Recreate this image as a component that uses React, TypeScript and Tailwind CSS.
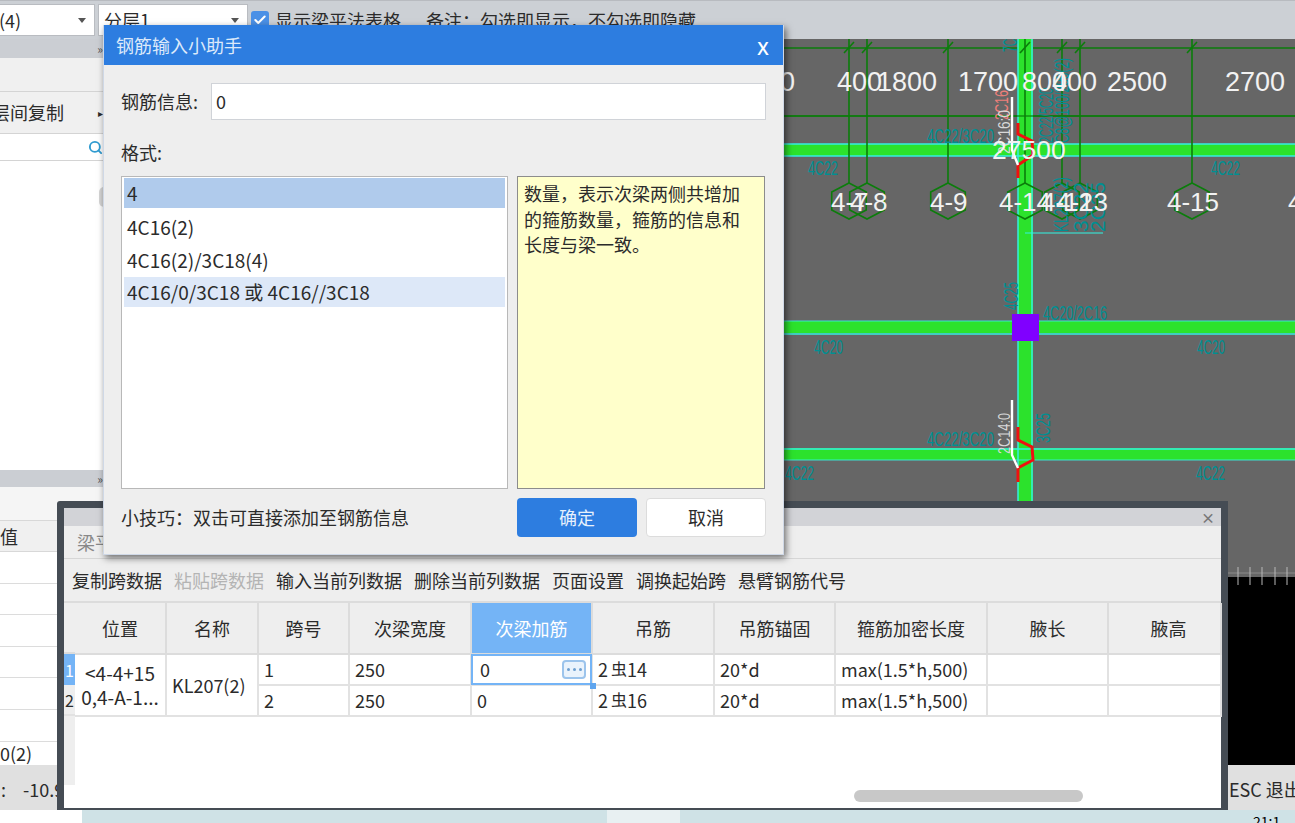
import React from 'react';
import { Check, Search } from 'lucide-react';

const uiFont = { fontFamily: '"Noto Sans CJK SC", "Noto Sans", sans-serif' };

// full-width punctuation, as the app prints it
const COMMA = '\uFF0C';
const COLON = '\uFF1A';
const NOTE_TEXT = `备注${COLON}勾选即显示${COMMA}不勾选即隐藏`;
const TIP_TEXT = `小技巧${COLON}双击可直接添加至钢筋信息`;
const HELP_TEXT = `数量${COMMA}表示次梁两侧共增加的箍筋数量${COMMA}箍筋的信息和长度与梁一致。`;

const GRID_X = [849, 867, 948, 1025, 1062, 1080, 1192];
const OX = 784;

const hexPoints = (cx: number, cy: number, r: number) => {
  const h = r * 0.96;
  return [
    [cx, cy - r],
    [cx + h, cy - r / 2],
    [cx + h, cy + r / 2],
    [cx, cy + r],
    [cx - h, cy + r / 2],
    [cx - h, cy - r / 2],
  ]
    .map((p) => `${p[0] - OX},${p[1] - 39}`)
    .join(' ');
};

const tx = (x: number) => x - OX;
const ty = (y: number) => y - 39;

const DIM_LABELS: [string, number][] = [
  ['0', 780],
  ['400', 837],
  ['1800', 877],
  ['1700', 958],
  ['800', 1022],
  ['400', 1052],
  ['2500', 1107],
  ['2700', 1225],
];

const AXIS_LABELS: [string, number][] = [
  ['4-7', 831],
  ['4-8', 850],
  ['4-9', 930],
  ['4-14', 999],
  ['4-12', 1041],
  ['4-13', 1056],
  ['4-15', 1167],
  ['4', 1288],
];

// text, x, baseline, drawn width
const TEAL_LABELS: [string, number, number, number][] = [
  ['4C22/3C20', 927, 143, 67],
  ['4C22', 808, 175, 30],
  ['4C22', 1211, 175, 29],
  ['4C20/2C16', 1043, 320, 64],
  ['4C20', 814, 354, 29],
  ['4C20', 1197, 354, 28],
  ['4C22/3C20', 927, 446, 67],
  ['4C22', 785, 480, 29],
  ['4C22', 1196, 480, 29],
];

const TEAL_ROTATED: [string, number, number, number][] = [
  ['7C', 1017, 52, 13],
  ['2C22/5C20', 1053, 143, 55],
  ['C8@100/200(2)', 1069, 143, 85],
  ['KL207(2)', 1068, 232, 55],
  ['3C22', 1088, 232, 50],
  ['2C25', 1105, 232, 50],
  ['4C25', 1018, 310, 28],
  ['3C25', 1050, 443, 30],
];

function Drawing() {
  return (
    <svg className="block h-[726px] w-[511px]" viewBox="0 0 511 726" style={{ fontFamily: '"Liberation Sans", sans-serif' }}>
      <rect width="511" height="538" fill="#666666" />
      {/* axis lines */}
      <g stroke="#0b7d0b" strokeWidth="1.6" fill="none">
        <line x1="0" x2="511" y1={ty(48)} y2={ty(48)} />
        <line x1="0" x2="511" y1={ty(116)} y2={ty(116)} />
      </g>
      {/* beams */}
      <rect x="0" y={ty(144)} width="511" height="12" fill="#2ce22c" />
      <rect x="0" y={ty(321)} width="511" height="12" fill="#2ce22c" />
      <rect x="0" y={ty(448)} width="511" height="12" fill="#2ce22c" />
      <rect x={tx(1018)} y="0" width="15" height="462" fill="#2ce22c" />
      <g stroke="#35efe0" strokeWidth="1.5">
        <line x1="0" x2="511" y1={ty(144)} y2={ty(144)} />
        <line x1="0" x2="511" y1={ty(156)} y2={ty(156)} />
        <line x1="0" x2="511" y1={ty(321)} y2={ty(321)} strokeOpacity="0.6" />
        <line x1="0" x2="511" y1={ty(334)} y2={ty(334)} />
        <line x1="0" x2="511" y1={ty(449)} y2={ty(449)} />
        <line x1="0" x2="511" y1={ty(460)} y2={ty(460)} strokeOpacity="0.6" />
        <line x1={tx(1018)} x2={tx(1018)} y1="0" y2="462" />
        <line x1={tx(1032)} x2={tx(1032)} y1="0" y2="462" />
        <line x1={tx(1025)} x2={tx(1103)} y1={ty(233)} y2={ty(233)} strokeOpacity="0.7" />
      </g>
      <g stroke="#0b7d0b" strokeWidth="1.6" fill="none">
        <line x1="0" x2="511" y1={ty(116)} y2={ty(116)} strokeOpacity="0.8" />
        {GRID_X.map((x) => (
          <g key={x}>
            <line x1={tx(x)} x2={tx(x)} y1={0} y2={ty(183)} />
            <line x1={tx(x) - 5} x2={tx(x) + 5} y1={ty(53)} y2={ty(42)} />
            <polygon points={hexPoints(x, 201, 18)} />
          </g>
        ))}
      </g>
      <rect x={tx(1012)} y={ty(314)} width="27" height="27" fill="#8000ff" />
      {/* teal rebar notes */}
      <g fill="#008f92" fontSize="20">
        {TEAL_LABELS.map(([t, x, y, w]) => (
          <text key={`${t}-${x}-${y}`} x={tx(x)} y={ty(y)} textLength={w} lengthAdjust="spacingAndGlyphs">
            {t}
          </text>
        ))}
        {TEAL_ROTATED.map(([t, x, y, w]) => (
          <text key={`${t}-${x}`} transform={`translate(${tx(x)} ${ty(y)}) rotate(-90)`} textLength={w} lengthAdjust="spacingAndGlyphs">
            {t}
          </text>
        ))}
      </g>
      {/* hanger bars */}
      <g fill="none" strokeWidth="3">
        <polyline stroke="#f01010" points={`${tx(1018)},${ty(123)} ${tx(1018)},${ty(134)} ${tx(1032)},${ty(141)} ${tx(1033)},${ty(155)} ${tx(1018)},${ty(165)} ${tx(1018)},${ty(178)}`} />
        <polyline stroke="#ffffff" strokeWidth="2.4" points={`${tx(1012)},${ty(97)} ${tx(1012)},${ty(150)} ${tx(1018)},${ty(165)}`} />
        <polyline stroke="#f01010" points={`${tx(1018)},${ty(427)} ${tx(1018)},${ty(440)} ${tx(1032)},${ty(447)} ${tx(1033)},${ty(460)} ${tx(1018)},${ty(468)} ${tx(1018)},${ty(482)}`} />
        <polyline stroke="#ffffff" strokeWidth="2.4" points={`${tx(1012)},${ty(400)} ${tx(1012)},${ty(455)} ${tx(1018)},${ty(468)}`} />
      </g>
      <text transform={`translate(${tx(1008)} ${ty(120)}) rotate(-90)`} fill="#ee7f7a" fontSize="18" textLength="30" lengthAdjust="spacingAndGlyphs">2C16</text>
      <text transform={`translate(${tx(1010)} ${ty(154)}) rotate(-90)`} fill="#d8d8d8" fontSize="17" textLength="44" lengthAdjust="spacingAndGlyphs">2C16:0</text>
      <text transform={`translate(${tx(1010)} ${ty(454)}) rotate(-90)`} fill="#d8d8d8" fontSize="17" textLength="41" lengthAdjust="spacingAndGlyphs">2C14:0</text>
      {/* dimensions and axis names */}
      <g fill="#f2f2f2" fontSize="27">
        {DIM_LABELS.map(([t, x]) => (
          <text key={`${t}-${x}`} x={tx(x)} y={ty(91)}>{t}</text>
        ))}
        <text x={tx(992)} y={ty(159)} fontSize="26.5">27500</text>
      </g>
      <g fill="#f2f2f2" fontSize="26">
        {AXIS_LABELS.map(([t, x]) => (
          <text key={`${t}-${x}`} x={tx(x)} y={ty(211)}>{t}</text>
        ))}
      </g>
      {/* paper edge of the model view */}
      <rect x="0" y={ty(577)} width="511" height="188" fill="#000000" />
      <line x1={tx(1228)} x2="511" y1={ty(573)} y2={ty(573)} stroke="#8a8a8a" />
      <g stroke="#b8b8b8">
        {[1238, 1250, 1262, 1275, 1287].map((x) => (
          <line key={x} x1={tx(x)} x2={tx(x)} y1={ty(567)} y2={ty(585)} />
        ))}
      </g>
    </svg>
  );
}

function Combo({ text, className }: { text: string; className: string }) {
  return (
    <div className={`flex h-8 items-center justify-between overflow-hidden border border-[#b9bcc1] bg-white pr-[8px] text-[18px] text-[#2b2b2b] ${className}`}>
      <span>{text}</span>
      <span className="h-0 w-0 border-x-[4px] border-t-[5px] border-x-transparent border-t-[#555]" />
    </div>
  );
}

function LeftPanel() {
  return (
    <div className="flex w-[273px] shrink-0 flex-col bg-white text-[18px] text-[#2b2b2b]">
      <div className="flex h-[19px] items-center justify-end bg-[#cbced3] pr-[170px] text-[12px] leading-none text-[#555]">»</div>
      <div className="h-[34px] border-b border-[#d4d4d4] bg-[#f0f0f0]" />
      <div className="flex h-[41px] items-center justify-between bg-[#f0f0f0] pr-[170px]">
        <span className="ml-[-8px] whitespace-nowrap">层间复制</span>
        <span className="text-[10px]">▸</span>
      </div>
      <div className="flex h-[28px] items-center justify-end border-y border-[#d4d4d4] pr-[170px]">
        <Search className="h-[15px] w-[15px] text-[#2f9bd0]" strokeWidth={3} />
      </div>
      <div className="flex h-[309px] justify-end pr-[169px] pt-[26px]">
        <div className="h-[20px] w-[5px] rounded-l-full bg-[#d6d6d6]" />
      </div>
      <div className="flex h-[17px] items-center justify-end bg-[#cbced3] pr-[170px] text-[12px] leading-none text-[#555]">»</div>
      <div className="h-[33px] bg-[#f5f5f5]" />
      <div className="flex h-[32px] items-center border-y border-[#d8d8d8] bg-[#f0f0f0] text-[18px]">值</div>
      {[0, 1, 2, 3, 4, 5].map((i) => (
        <div key={i} className="h-[31.6px] border-b border-[#dcdcdc]" />
      ))}
      <div className="flex h-[23px] items-end text-[18px] leading-[24px]">0(2)</div>
    </div>
  );
}

function AssistantDialog() {
  const formats = ['4', '4C16(2)', '4C16(2)/3C18(4)', '4C16/0/3C18 或 4C16//3C18'];
  return (
    <div className="absolute left-[103px] top-[25px] flex h-[530px] w-[681px] flex-col border border-t-0 border-[#cfd8e6] bg-[#eeeeee] text-[18px] text-[#2b2b2b] shadow-[2px_3px_7px_rgba(0,0,0,0.55)]">
      <div className="flex h-10 shrink-0 items-center justify-between bg-[#2d7de0] pl-[12px] pr-[14px] text-white">
        <span className="text-[#dce9fa]">钢筋输入小助手</span>
        <span className="text-[24px] leading-none">x</span>
      </div>
      <div className="flex flex-1 flex-col pl-[17px] pr-[17px] pt-[18px]">
        <div className="flex h-[37px] items-center">
          <label className="w-[90px] whitespace-nowrap">钢筋信息:</label>
          <div className="flex h-[37px] flex-1 items-center border border-[#d0d3d8] bg-white pl-[4px]">0</div>
        </div>
        <div className="mt-[20px] h-[25px] leading-[25px]">格式:</div>
        <div className="mt-[11px] flex h-[313px] gap-[9px]">
          <div className="w-[387px] border border-[#b8b8b8] bg-white px-[2px] pt-[1px] text-[19px]">
            {formats.map((f, i) => (
              <div
                key={f}
                className={`flex items-center whitespace-nowrap pl-[3px] ${i === 0 ? 'mb-[3px] h-[30px] bg-[#b0cbec]' : i === 3 ? 'h-[30px] bg-[#dde8f8]' : 'h-[33px]'}`}
              >
                {f}
              </div>
            ))}
          </div>
          <div className="w-[248px] border border-[#8c8c8c] bg-[#ffffcb] pl-[6px] pr-[20px] pt-[4px] leading-[25.5px]">
            {HELP_TEXT}
          </div>
        </div>
        <div className="mt-[9px] flex items-center justify-between">
          <span className="whitespace-nowrap">{TIP_TEXT}</span>
          <div className="flex gap-[9px]">
            <button className="h-[39px] w-[120px] rounded-[4px] bg-[#2d7de0] text-[#e6f0fc]">确定</button>
            <button className="h-[39px] w-[120px] rounded-[4px] border border-[#dcdcdc] bg-white">取消</button>
          </div>
        </div>
      </div>
    </div>
  );
}

const Rebar = ({ size }: { size: string }) => (
  <span>
    2<span className="relative top-[-2px] ml-[3px] text-[16px]">虫</span>
    {size}
  </span>
);

const HEADERS = ['位置', '名称', '跨号', '次梁宽度', '次梁加筋', '吊筋', '吊筋锚固', '箍筋加密长度', '腋长', '腋高'];
const WIDTHS = ['w-[91px]', 'w-[92px]', 'w-[91px]', 'w-[122px]', 'w-[121px]', 'w-[122px]', 'w-[121px]', 'w-[152px]', 'w-[121px]', 'w-[113px]'];
const TOOLS = ['复制跨数据', '粘贴跨数据', '输入当前列数据', '删除当前列数据', '页面设置', '调换起始跨', '悬臂钢筋代号'];

function BeamTableWindow() {
  const cell = 'h-[31px] border-b-2 border-r-2 border-[#e2e2e2] px-[5px] text-left font-normal whitespace-nowrap';
  return (
    <div className="absolute left-[57px] top-[501px] flex h-[309px] w-[1171px] flex-col rounded-tl-[3px] border-x-[7px] border-b-[2px] border-t-[7px] border-[#454c54] bg-white text-[18px] text-[#2b2b2b]">
      <div className="flex h-[18px] shrink-0 items-center justify-end bg-[#d2d3d7] pr-[6px] text-[14px] font-bold leading-none text-[#777]">×</div>
      <div className="flex h-[33px] shrink-0 items-center border-b border-[#d6d6d6] bg-[#eeeeee] pl-[13px] text-[#888]">梁平法表格</div>
      <div className="flex h-[44px] shrink-0 items-center gap-[12px] border-b-2 border-[#dcdcdc] bg-[#eeeeee] pl-[8px]">
        {TOOLS.map((t, i) => (
          <span key={t} className={i === 1 ? 'text-[#b4b4b4]' : ''}>{t}</span>
        ))}
      </div>
      <div className="flex min-h-0 flex-1">
        <div className="flex w-[11px] shrink-0 flex-col text-center text-[16px] leading-none">
          <div className="h-[51px] border-b-2 border-[#dcdcdc] bg-[#eeeeee]" />
          <div className="flex h-[31px] items-center justify-center bg-[#74b4f6] text-white">1</div>
          <div className="flex h-[31px] items-center justify-center border-b-2 border-[#e2e2e2] bg-[#eeeeee]">2</div>
          <div className="h-[69px] bg-[#eeeeee]" />
        </div>
        <table className="h-fit w-[1146px] table-fixed border-collapse self-start">
          <thead>
            <tr className="h-[51px] bg-[#eeeeee]">
              {HEADERS.map((h, i) => (
                <th key={h} className={`${WIDTHS[i]} border-b-2 border-r-2 border-[#dcdcdc] text-center font-normal ${i === 4 ? 'bg-[#74b4f6] text-white' : ''} ${i === 9 ? 'pl-[8px]' : ''}`}>
                  {h}
                </th>
              ))}
            </tr>
          </thead>
          <tbody>
            <tr>
              <td rowSpan={2} className="border-b-2 border-r-2 border-[#e2e2e2] px-[4px] text-center text-[19px] leading-[24px] whitespace-nowrap">
                <div>&lt;4-4+15</div>
                <div>0,4-A-1...</div>
              </td>
              <td rowSpan={2} className="border-b-2 border-r-2 border-[#e2e2e2] px-[5px] whitespace-nowrap">KL207(2)</td>
              <td className={cell}>1</td>
              <td className={cell}>250</td>
              <td className={`relative ${cell}`}>
                <div className="flex items-center justify-between pl-[3px]">
                  <span>0</span>
                  <span className="flex h-[19px] w-[24px] items-center justify-center gap-[3px] rounded-[4px] border-2 border-[#9cc4ec] bg-[#eaf3fc]">
                    <i className="h-[3px] w-[3px] rounded-full bg-[#6d9fd0]" />
                    <i className="h-[3px] w-[3px] rounded-full bg-[#6d9fd0]" />
                    <i className="h-[3px] w-[3px] rounded-full bg-[#6d9fd0]" />
                  </span>
                </div>
                <span className="absolute inset-[-1px] border-2 border-[#74b4f6]" />
                <span className="absolute bottom-[-5px] right-[-5px] h-[6px] w-[6px] bg-[#5fa5ee]" />
              </td>
              <td className={cell}><Rebar size="14" /></td>
              <td className={cell}>20*d</td>
              <td className={cell}>max(1.5*h,500)</td>
              <td className={cell} />
              <td className={cell} />
            </tr>
            <tr>
              <td className={cell}>2</td>
              <td className={cell}>250</td>
              <td className={cell}>0</td>
              <td className={cell}><Rebar size="16" /></td>
              <td className={cell}>20*d</td>
              <td className={cell}>max(1.5*h,500)</td>
              <td className={cell} />
              <td className={cell} />
            </tr>
          </tbody>
        </table>
      </div>
      <div className="absolute bottom-[6px] left-[790px] h-[12px] w-[229px] rounded-full bg-[#c8c8c8]" />
    </div>
  );
}

export default function App() {
  return (
    <div className="relative h-[823px] w-[1295px] overflow-hidden bg-white" style={uiFont}>
      {/* main toolbar */}
      <div className="flex h-[39px] items-center gap-[3px] border-t border-[#b8bbc0] bg-[#ccd0d5] text-[18px] text-[#2b2b2b]">
        <Combo text="(4)" className="ml-[-2px] w-[97px]" />
        <Combo text="分层1" className="w-[150px] pl-[5px]" />
        <span className="flex h-[18px] w-[18px] items-center justify-center rounded-[3px] bg-[#4a90e6] text-white">
          <Check className="h-[14px] w-[14px]" strokeWidth={3.5} />
        </span>
        <span className="ml-[3px] whitespace-nowrap">显示梁平法表格</span>
        <span className="ml-[22px] whitespace-nowrap">{NOTE_TEXT}</span>
      </div>
      <div className="flex h-[726px]">
        <LeftPanel />
        <div className="flex-1 overflow-hidden">
          <div className="ml-auto w-[511px]">
            <Drawing />
          </div>
        </div>
      </div>
      {/* status bar */}
      <div className="flex h-[45px] items-center bg-[#e0e0e0] pt-[3px] text-[18px] text-[#2b2b2b]">
        <span className="ml-[1px]">:</span>
        <span className="ml-[17px] whitespace-nowrap">-10.9</span>
        <span className="ml-auto w-[66px] overflow-hidden whitespace-nowrap">ESC 退出</span>
      </div>
      {/* taskbar strip */}
      <div className="flex h-[13px]">
        <div className="w-[82px] bg-white" />
        <div className="w-[525px] bg-[#cfe2e6]" />
        <div className="w-[73px] bg-[#e8f0f2]" />
        <div className="relative flex-1 bg-[#cfe2e6]">
          <span className="absolute left-[573px] top-[4px] text-[14px] leading-none text-black">21:1</span>
        </div>
      </div>
      <BeamTableWindow />
      <AssistantDialog />
    </div>
  );
}
